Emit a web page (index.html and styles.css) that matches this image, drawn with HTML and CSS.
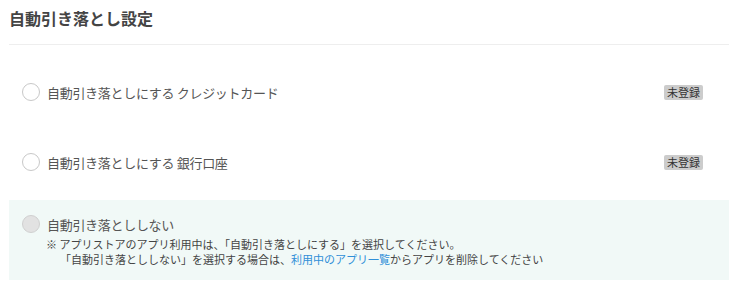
FILE: index.html
```html
<!DOCTYPE html>
<html lang="ja">
<head>
  <meta charset="UTF-8" />
  <title>自動引き落とし設定</title>
  <link rel="stylesheet" href="styles.css">
</head>
<body>

<div class="settings">
  <h3 class="settings-title">自動引き落とし設定</h3>

  <div class="pay-list">
    <label class="pay-row">
      <span class="radio"></span>
      <span class="pay-label">自動引き落としにする クレジットカード</span>
      <span class="badge">未登録</span>
    </label>

    <label class="pay-row">
      <span class="radio"></span>
      <span class="pay-label">自動引き落としにする 銀行口座</span>
      <span class="badge">未登録</span>
    </label>

    <div class="pay-none">
      <div class="pay-none-head">
        <span class="radio disabled"></span>
        <span class="pay-label">自動引き落とししない</span>
      </div>
      <div class="note">
        <p>※ アプリストアのアプリ利用中は、「自動引き落としにする」を選択してください。</p>
        <p class="indent">「自動引き落とししない」を選択する場合は、<a href="#">利用中のアプリ一覧</a>からアプリを削除してください</p>
      </div>
    </div>
  </div>
</div>

</body>
</html>
```

FILE: styles.css
```css
body {
  font-family: "Noto Sans CJK JP", "Noto Sans", sans-serif;
  background-color: #ffffff;
  margin: 0;
  padding: 0 7px 0 9px;
  color: #555;
}

.settings-title {
  margin: 0;
  height: 44px;
  line-height: 36px;
  font-size: 16px;
  font-weight: 700;
  color: #444;
  border-bottom: 1px solid #eeeeee;
}

.pay-list {
  padding-top: 12px;
}

.pay-row {
  display: flex;
  align-items: center;
  height: 70px;
  padding: 0 26px 0 13px;
}

.radio {
  width: 16px;
  height: 16px;
  border: 1px solid #c8c8c8;
  border-radius: 50%;
  background-color: #fff;
  flex-shrink: 0;
}

.radio.disabled {
  background-color: #e2e2e2;
  border-color: #d0d0d0;
}

.pay-label {
  margin-left: 7px;
  font-size: 13px;
  letter-spacing: -0.3px;
  color: #555;
}

.badge {
  margin-left: auto;
  background-color: #cccccc;
  color: #333;
  font-size: 11px;
  line-height: 15px;
  padding: 0 3px;
  border-radius: 2px;
}

.pay-none {
  margin-top: 3px;
  background-color: #f1f9f7;
  padding: 15px 13px 13px;
}

.pay-none-head {
  display: flex;
  align-items: center;
  height: 18px;
}

.note {
  margin: 4px 0 0 24px;
  font-size: 11px;
  line-height: 15px;
  color: #444;
}

.note p {
  margin: 0;
}

.note .indent {
  padding-left: 14px;
}

.note a {
  color: #2f8fd8;
  text-decoration: none;
}
```
